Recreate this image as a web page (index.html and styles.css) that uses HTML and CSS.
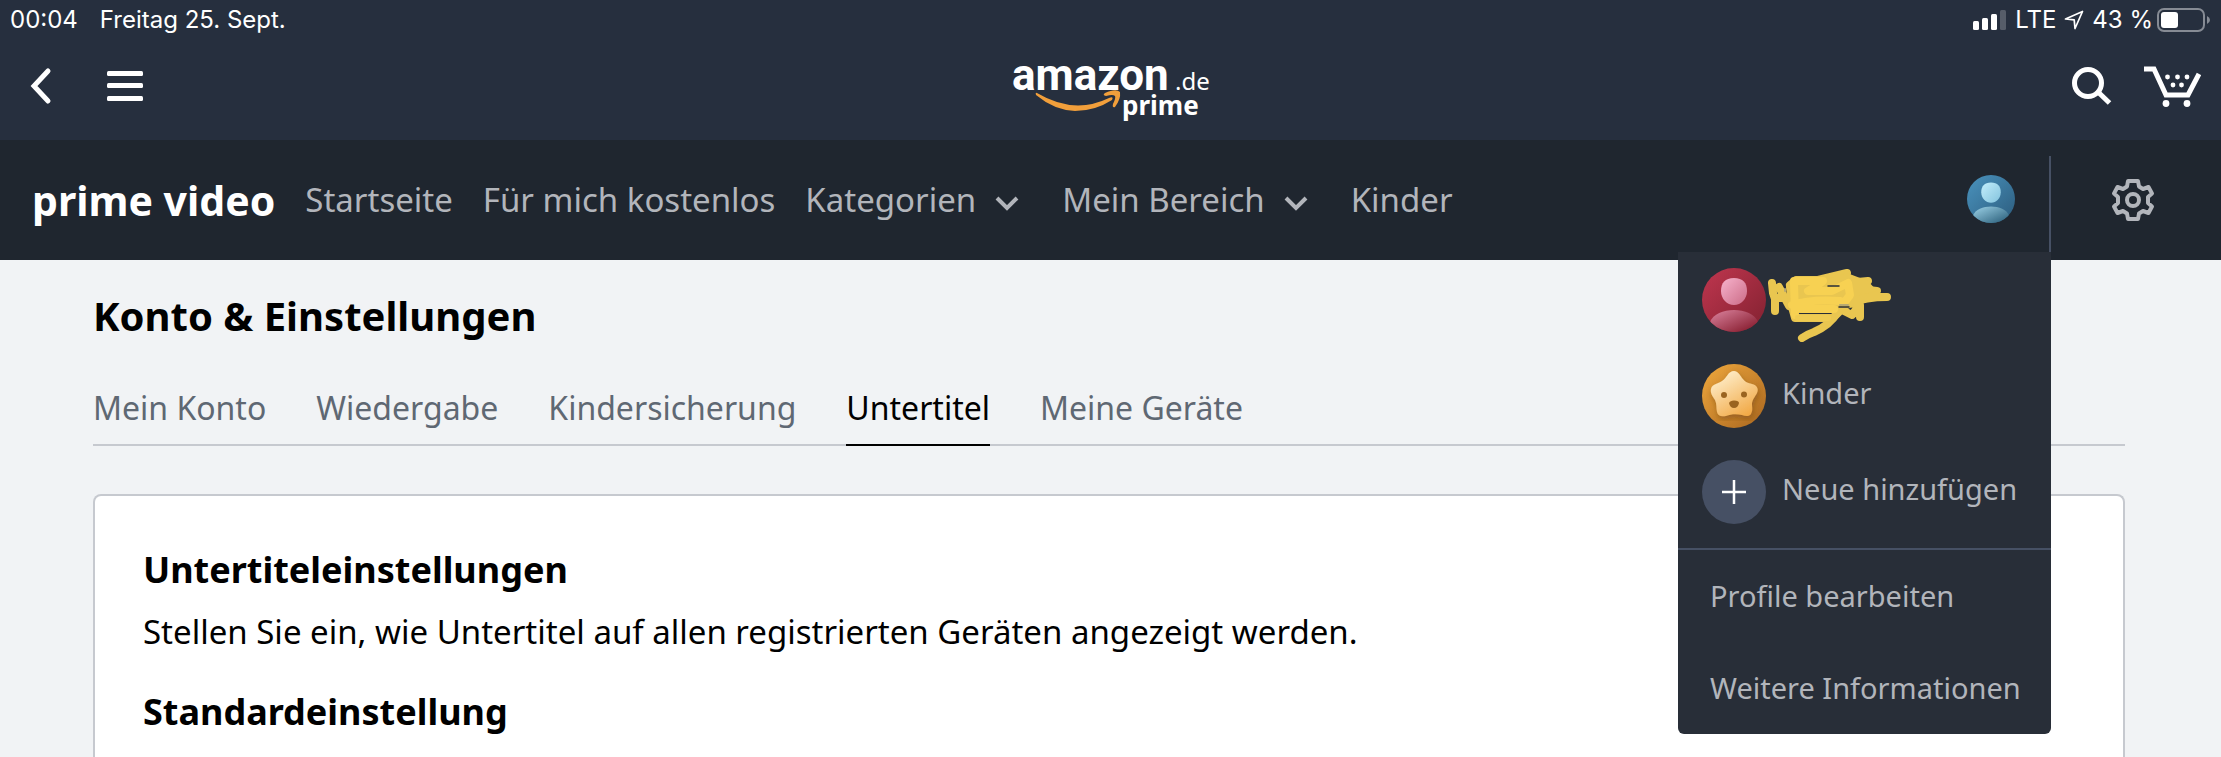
FILE: index.html
```html
<!DOCTYPE html>
<html lang="de">
<head>
	<meta charset="UTF-8">
	<meta name="viewport" content="width=device-width, initial-scale=1">
	<title>Konto &amp; Einstellungen</title>

	<link rel="stylesheet" href="styles.css">
</head>
<body>

	<header class="header">
		<div class="status">
			<div class="status-left">
				<span>00:04</span>
				<span>Freitag 25. Sept.</span>
			</div>
			<div class="status-right">
				<svg class="signal" width="34" height="21" viewBox="0 0 34 21" fill="#fff">
					<rect x="0" y="11" width="6" height="9" rx="1.5"/>
					<rect x="9" y="8" width="6" height="12" rx="1.5"/>
					<rect x="18" y="4" width="6" height="16" rx="1.5"/>
					<rect x="27" y="0" width="6" height="20" rx="1.5" fill="#565d69"/>
				</svg>
				<span>LTE</span>
				<svg width="20" height="20" viewBox="0 0 20 20" fill="none" stroke="#fff" stroke-width="1.7" stroke-linejoin="round">
					<path d="M1.500 9 L18.500 1.500 L11 18.500 L10.200 9.800 Z"/>
				</svg>
				<span>43 %</span>
				<svg class="battery" width="54" height="24" viewBox="0 0 54 24">
					<rect x="1" y="1" width="46" height="22" rx="6" fill="none" stroke="#868b94" stroke-width="2"/>
					<rect x="4" y="4" width="17" height="16" rx="3" fill="#fff"/>
					<path d="M50 8 Q53 9.500 53 12 Q53 14.500 50 16 Z" fill="#868b94"/>
				</svg>
			</div>
		</div>

		<div class="topbar">
			<div class="topbar-side">
				<button class="icon-btn back" type="button" aria-label="Zurück">
					<svg width="22" height="38" viewBox="0 0 22 38" fill="none" stroke="#fff" stroke-width="5" stroke-linecap="round">
						<path d="M18 4 L4 19 L18 34" stroke-linejoin="miter"/>
					</svg>
				</button>
				<button class="icon-btn" type="button" aria-label="Menü">
					<svg width="36" height="32" viewBox="0 0 36 32" fill="#fff">
						<rect y="1" width="36" height="5" rx="1.5"/>
						<rect y="13" width="36" height="5" rx="1.5"/>
						<rect y="26" width="36" height="5" rx="1.5"/>
					</svg>
				</button>
			</div>
			<a class="logo" href="#" aria-label="amazon.de prime">
				<svg width="200" height="70" viewBox="0 0 200 70">
					<text class="logo-name" x="1" y="39">amazon</text>
					<text class="logo-tld" x="164" y="39">.de</text>
					<text class="logo-prime" x="111" y="64">prime</text>
					<path d="M26 42 Q63 64 98 47 Q103 45 101 49 Q84 60 64 60 Q43 59 25 44 Q24 41 26 42 Z" fill="#f19f3b"/>
					<path d="M94 42 Q105 37 109 41 Q110 48 104 56 Q101 57 102 53 Q105 47 104 45 Q102 43 95 45 Q91 44 94 42 Z" fill="#f19f3b"/>
				</svg>
			</a>
			<div class="topbar-side topbar-right">
				<button class="icon-btn" type="button" aria-label="Suche">
					<svg width="42" height="40" viewBox="0 0 42 40" fill="none" stroke="#fff" stroke-width="5">
						<circle cx="17" cy="17" r="13.500"/>
						<path d="M26 25 L38.500 37"/>
					</svg>
				</button>
				<button class="icon-btn" type="button" aria-label="Einkaufswagen">
					<svg width="58" height="42" viewBox="0 0 58 42">
						<path d="M1 4 H11 L23 30 H45 L56 9" fill="none" stroke="#fff" stroke-width="5"/>
						<g fill="#fff">
							<circle cx="24.500" cy="12" r="2.400"/>
							<circle cx="34.500" cy="12" r="2.400"/>
							<circle cx="44" cy="12" r="2.400"/>
							<circle cx="30" cy="20" r="2.400"/>
							<circle cx="38.500" cy="20" r="2.400"/>
							<circle cx="23" cy="38.500" r="3.400"/>
							<circle cx="44" cy="38.500" r="3.400"/>
						</g>
					</svg>
				</button>
			</div>
		</div>
	</header>

	<nav class="nav">
		<a class="brand" href="#">prime video</a>
		<ul class="nav-list">
			<li><a href="#">Startseite</a></li>
			<li><a href="#">Für mich kostenlos</a></li>
			<li>
				<a href="#">Kategorien
					<svg class="chevron" width="26" height="18" viewBox="0 0 26 18"><path d="M3 3 L13 13 L23 3"/></svg>
				</a>
			</li>
			<li>
				<a href="#">Mein Bereich
					<svg class="chevron" width="26" height="18" viewBox="0 0 26 18"><path d="M3 3 L13 13 L23 3"/></svg>
				</a>
			</li>
			<li><a href="#">Kinder</a></li>
		</ul>

		<div class="profile">
			<button class="icon-btn" type="button" aria-label="Profil">
				<svg width="48" height="48" viewBox="0 0 64 64">
					<defs>
						<linearGradient id="blueBg" x1="0" y1="0" x2="1" y2="1"><stop offset="0" stop-color="#4a93be"/><stop offset="1" stop-color="#2c5c7d"/></linearGradient>
						<linearGradient id="blueHead" x1="0" y1="0" x2="1" y2="1"><stop offset="0" stop-color="#c3eefc"/><stop offset="1" stop-color="#83c3dd"/></linearGradient>
						<linearGradient id="blueBody" x1="0" y1="0" x2="1" y2="1"><stop offset="0" stop-color="#9dd3e8"/><stop offset="1" stop-color="#255975"/></linearGradient>
						<clipPath id="round"><circle cx="32" cy="32" r="32"/></clipPath>
					</defs>
					<circle cx="32" cy="32" r="32" fill="url(#blueBg)"/>
					<path d="M32 10 C41 10 45 15 45 23 C45 31 39 37 32 37 C25 37 19 31 19 23 C19 15 23 10 32 10 Z" fill="url(#blueHead)"/>
					<path clip-path="url(#round)" d="M8 54 C14 38 50 38 56 54 V64 H8 Z" fill="url(#blueBody)"/>
				</svg>
			</button>

			<div class="menu">
				<ul class="menu-profiles">
					<li>
						<a href="#" aria-label="Profil">
							<svg class="avatar" width="64" height="64" viewBox="0 0 64 64">
								<defs>
									<linearGradient id="redBg" x1="0" y1="0" x2="1" y2="1"><stop offset="0" stop-color="#c0364f"/><stop offset="1" stop-color="#812130"/></linearGradient>
									<linearGradient id="redHead" x1="0" y1="0" x2="1" y2="1"><stop offset="0" stop-color="#f7b3cd"/><stop offset="1" stop-color="#cb6b86"/></linearGradient>
									<linearGradient id="redBody" x1="0" y1="0" x2="1" y2="1"><stop offset="0" stop-color="#dc85a0"/><stop offset="1" stop-color="#7e1223"/></linearGradient>
								</defs>
								<circle cx="32" cy="32" r="32" fill="url(#redBg)"/>
								<path d="M32 10 C41 10 45 15 45 23 C45 31 39 37 32 37 C25 37 19 31 19 23 C19 15 23 10 32 10 Z" fill="url(#redHead)"/>
								<path clip-path="url(#round)" d="M8 54 C14 38 50 38 56 54 V64 H8 Z" fill="url(#redBody)"/>
							</svg>
							<!-- name scribbled over -->
							<svg class="scribble" width="124" height="84" viewBox="0 -3 124 84" fill="none" stroke-width="8" stroke-linecap="round" stroke-linejoin="round">
								<g stroke="#e9c650">
									<path d="M4 22 L5 32 L7 38 V50 M9 37 H24 M11 26 L21 45"/>
									<path d="M22 24 L28 19 H50 L79 12 L58 24 L100 20 L82 27 L109 30 L84 36 L119 36 Q98 36 82 42 L92 44 V56 M90 46 L84 54 L76 50"/>
									<path d="M22 26 L24 46 L27 57 H65 L72 50"/>
									<path d="M69 52 Q62 64 46 71 Q40 73 34 77"/>
								</g>
								<path d="M22 24 H84 V44 L70 50 H27 Z" fill="#e9c650" stroke="#e9c650" stroke-width="4"/>
								<path d="M60 18 L79 12 L100 20 L109 30 L84 36 Z" fill="#e9c650"/>
								<g stroke="#f7d152">
									<path d="M26 20 H55 Q46 27 40 30 H64 L80 22 L82 34 L76 42 M26 22 L27 54 M24 44 Q42 38 72 40 M34 48 H66"/>
									<path d="M30 57 H60" stroke="#efcb51" stroke-width="6"/>
								</g>
								<path d="M60 25 h11 M71 46 h10" stroke="#282e38" stroke-width="1.500"/>
								<path d="M17 28 v2 M72 44 h8" stroke="#b8aa72" stroke-width="2"/>
							</svg>
						</a>
					</li>
					<li>
						<a href="#">
							<svg class="avatar" width="64" height="64" viewBox="0 0 64 64">
								<defs>
									<linearGradient id="goldBg" x1="0" y1="0" x2="1" y2="1"><stop offset="0" stop-color="#f0a93d"/><stop offset="1" stop-color="#a9661f"/></linearGradient>
									<linearGradient id="goldStar" x1="0.200" y1="0" x2="0.800" y2="1"><stop offset="0" stop-color="#fff1d0"/><stop offset="1" stop-color="#f1a742"/></linearGradient>
									<filter id="starShadow"><feDropShadow dx="1" dy="3" stdDeviation="3" flood-color="#6b3f08" flood-opacity="0.500"/></filter>
								</defs>
								<circle cx="32" cy="32" r="32" fill="url(#goldBg)"/>
								<path filter="url(#starShadow)" d="M32 7 C36 7 38 11 40 14 C43 18 46 19 50 20 C55 21 57 25 55 29 C53 33 50 36 50 40 C50 44 51 46 49 50 C47 53 43 52 40 51 C35 50 29 50 24 52 C19 53 16 52 15 48 C14 44 15 40 13 36 C11 33 8 29 9 25 C10 20 16 20 20 17 C25 14 26 7 32 7 Z" fill="url(#goldStar)"/>
								<g fill="#9a6420">
									<circle cx="22" cy="31" r="3"/>
									<circle cx="42" cy="30.500" r="3"/>
									<path d="M27 39 Q28 36.500 32 36.500 Q37 36.500 37 39 Q36 44 32 44 Q28 44 27 39 Z"/>
								</g>
							</svg>
							<span>Kinder</span>
						</a>
					</li>
					<li>
						<a href="#">
							<svg class="avatar" width="64" height="64" viewBox="0 0 64 64">
								<circle cx="32" cy="32" r="32" fill="#465064"/>
								<path d="M32 20 V44 M20 32 H44" stroke="#fff" stroke-width="2.500"/>
							</svg>
							<span>Neue hinzufügen</span>
						</a>
					</li>
				</ul>
				<ul class="menu-links">
					<li><a href="#">Profile bearbeiten</a></li>
					<li><a href="#">Weitere Informationen</a></li>
				</ul>
			</div>
		</div>

		<button class="icon-btn settings" type="button" aria-label="Einstellungen">
			<svg width="44" height="44" viewBox="0 0 44 44" fill="none" stroke="#b2b5bb" stroke-width="4" stroke-linejoin="round">
				<path d="M17 3 H27 L28 8.500 L32 11 L37.500 9 L41 15.500 L37 19 V25 L41 28.500 L37.500 35 L32 33 L28 35.500 L27 41 H17 L16 35.500 L12 33 L6.500 35 L3 28.500 L7 25 V19 L3 15.500 L6.500 9 L12 11 L16 8.500 Z"/>
				<circle cx="22" cy="22" r="6"/>
			</svg>
		</button>
	</nav>

	<main class="main">
		<h1>Konto &amp; Einstellungen</h1>
		<ul class="tabs">
			<li><a href="#">Mein Konto</a></li>
			<li><a href="#">Wiedergabe</a></li>
			<li><a href="#">Kindersicherung</a></li>
			<li class="current"><a href="#">Untertitel</a></li>
			<li><a href="#">Meine Geräte</a></li>
		</ul>
		<section class="card">
			<h2>Untertiteleinstellungen</h2>
			<p>Stellen Sie ein, wie Untertitel auf allen registrierten Geräten angezeigt werden.</p>
			<h2>Standardeinstellung</h2>
		</section>
	</main>

</body>
</html>
```

FILE: styles.css
```css
*{
	margin: 0;
	padding: 0;
	box-sizing: border-box;
}

body{
	min-height: 100vh;
	display: flex;
	flex-direction: column;
	background: #f1f3f5;
	color: #000;
	font-family: "Noto Sans", "Open Sans", sans-serif;
	font-size: 33px;
	line-height: 44px;
}

ul{
	list-style: none;
}

a{
	color: inherit;
	text-decoration: none;
}

svg{
	display: block;
	flex: none;
}

.icon-btn{
	border: none;
	background: none;
	cursor: pointer;
}

/*header*/
.header{
	background: #262f3e;
	color: #fff;
}

.status{
	display: flex;
	justify-content: space-between;
	padding: 4px 10px 0;
	font-family: Inter, sans-serif;
	font-size: 24px;
	line-height: 32px;
}

.status-left{
	display: flex;
	gap: 22px;
}

.status-right{
	display: flex;
	align-items: center;
	gap: 8px;
}

.battery{
	margin-left: -4px;
}

.topbar{
	display: flex;
	align-items: center;
	justify-content: space-between;
	height: 104px;
	padding: 0 20px 4px;
}

.topbar-side{
	flex: 1;
	display: flex;
	align-items: center;
	gap: 55px;
}

.topbar-right{
	justify-content: flex-end;
	gap: 30px;
}

.back{
	margin-left: 10px;
}

.logo text{
	fill: #fff;
}

.logo .logo-name{
	font-family: Roboto, sans-serif;
	font-size: 44px;
	font-weight: 700;
}

.logo-tld{
	font-size: 24px;
}

.logo-prime{
	font-size: 26px;
	font-weight: 700;
}

/*nav*/
.nav{
	display: flex;
	align-items: center;
	min-height: 120px;
	padding: 0 66px 0 32px;
	background: #1f262f;
	color: #b2b5bb;
}

.brand{
	color: #fff;
	font-size: 41px;
	font-weight: 700;
}

.nav-list{
	flex: 1;
	display: flex;
	gap: 30px;
	margin-left: 30px;
}

.nav-list a{
	display: flex;
	align-items: center;
	gap: 18px;
}

.chevron{
	fill: none;
	stroke: #b2b5bb;
	stroke-width: 4;
	margin: 8px 12px 0 0;
}

.profile{
	position: relative;
	align-self: flex-end;
	display: flex;
	height: 104px;
	padding-right: 34px;
	border-right: 2px solid #465064;
}

.profile .icon-btn{
	align-self: flex-start;
	padding-top: 19px;
}

.settings{
	margin-left: 60px;
}

/*profile menu*/
.menu{
	position: absolute;
	top: 96px;
	right: -2px;
	width: 373px;
	border-radius: 0 0 6px 6px;
	background: #282e38;
	font-size: 29px;
}

.menu-profiles{
	display: flex;
	flex-direction: column;
	gap: 32px;
	padding: 16px 24px 24px;
	border-bottom: 2px solid #465064;
}

.menu-profiles a{
	display: flex;
	align-items: center;
	gap: 16px;
	height: 64px;
	white-space: nowrap;
}

.menu-profiles span{
	padding-bottom: 6px;
}

.scribble{
	margin-left: -14px;
}

.menu-links{
	display: flex;
	flex-direction: column;
	gap: 48px;
	padding: 24px 32px;
	white-space: nowrap;
}

/*content*/
.main{
	flex: 1;
	display: flex;
	flex-direction: column;
	padding: 30px 96px 0 93px;
}

h1{
	font-size: 40px;
	line-height: 52px;
}

.tabs{
	display: flex;
	gap: 50px;
	margin-top: 44px;
	border-bottom: 2px solid #c6c9cf;
	color: #5f6873;
	font-size: 32px;
}

.tabs li{
	margin-bottom: -2px;
	padding-bottom: 14px;
	border-bottom: 2px solid transparent;
}

/*active tab*/
.tabs li.current{
	color: #000;
	border-bottom-color: #000;
}

.card{
	flex: 1;
	margin-top: 48px;
	padding: 48px;
	border: 2px solid #c6c9cf;
	border-bottom: none;
	border-radius: 8px 8px 0 0;
	background: #fff;
}

.card h2{
	font-size: 36px;
	line-height: 52px;
}

.card p{
	margin: 14px 0 32px;
}
```
